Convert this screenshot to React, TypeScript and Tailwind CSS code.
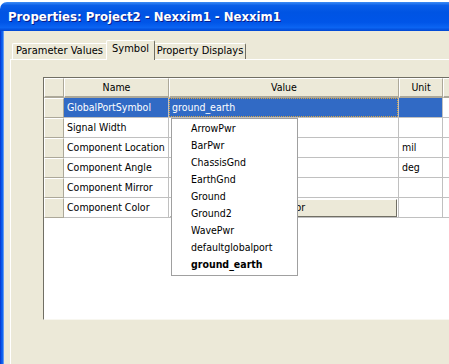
import React from "react";

const rows = [
  { name: "GlobalPortSymbol", value: "ground_earth", unit: "", selected: true },
  { name: "Signal Width", value: "", unit: "" },
  { name: "Component Location", value: "", unit: "mil" },
  { name: "Component Angle", value: "", unit: "deg" },
  { name: "Component Mirror", value: "", unit: "" },
  { name: "Component Color", value: "", unit: "", button: "Set Color" },
];

const symbols = [
  "ArrowPwr",
  "BarPwr",
  "ChassisGnd",
  "EarthGnd",
  "Ground",
  "Ground2",
  "WavePwr",
  "defaultglobalport",
];

const HeaderCell = ({ w, children }: { w: string; children?: React.ReactNode }) => (
  <div
    className={`${w} h-[20px] shrink-0 flex items-center justify-center bg-[#ece9d8] border-t border-l border-white border-r border-r-[#aca899] border-b-2 border-b-[#aca899]`}
  >
    {children}
  </div>
);

const App = () => {
  return (
    <div className="relative w-[449px] h-[364px] overflow-hidden bg-white text-[10.5px] text-black [font-family:'DejaVu_Sans_Condensed','Liberation_Sans',sans-serif]">
      <div className="h-[2px] bg-white" />
      <div className="h-[29px] rounded-tl-[7px] pl-[8px] flex items-center bg-[linear-gradient(to_bottom,#3d8cf5_0%,#0a5ee8_12%,#0054e3_35%,#0055e8_70%,#0b64f2_88%,#0046d2_100%)] text-white font-bold text-[13px] [text-shadow:1px_1px_#0a1d8c]">
        Properties: Project2 - Nexxim1 - Nexxim1
      </div>
      <div className="flex h-[333px]">
        <div className="w-[4px] shrink-0 bg-[linear-gradient(to_right,#0a2fc8,#0656ea,#1668ef,#8fb6f5)]" />
        <div className="flex-1 flex flex-col bg-[#ece9d8] pt-[9px] pl-[6px]">
          <div className="flex items-end h-[19px] pl-[2px] relative z-10 text-[11px]">
            <div className="w-[94px] h-[16px] flex items-center justify-center border-t border-l border-white rounded-tl-[2px]">
              Parameter Values
            </div>
            <div className="w-[49px] h-[20px] -mb-[1px] pb-[3px] flex items-center justify-center bg-[#ece9d8] border-t border-l border-white border-r border-r-[#716f64] rounded-t-[2px]">
              Symbol
            </div>
            <div className="w-[91px] h-[16px] flex items-center justify-center border-t border-white border-r border-r-[#716f64] rounded-tr-[2px]">
              Property Displays
            </div>
          </div>
          <div className="flex-1 border-l border-t border-white pl-[32px] pt-[17px]">
            <div className="h-[243px] w-[460px] bg-white border-l border-t border-[#716f64] border-b border-b-[#f8f7f0]">
              <div className="flex">
                <HeaderCell w="w-[20px]" />
                <HeaderCell w="w-[105px]">Name</HeaderCell>
                <HeaderCell w="w-[230px]">Value</HeaderCell>
                <HeaderCell w="w-[44px]">Unit</HeaderCell>
                <HeaderCell w="w-[60px]" />
              </div>
              {rows.map((r) => (
                <div key={r.name} className="flex h-[20px]">
                  <div className="w-[20px] shrink-0 bg-[#ece9d8] border-t border-l border-white border-r border-b border-r-[#aca899] border-b-[#aca899]" />
                  <div
                    className={`w-[105px] shrink-0 flex items-center pl-[3px] border-r border-b border-[#c0c0c0] whitespace-nowrap overflow-hidden ${
                      r.selected ? "bg-[#316ac5] text-white" : ""
                    }`}
                  >
                    {r.name}
                  </div>
                  <div
                    className={`w-[230px] shrink-0 flex items-center border-r border-b border-[#c0c0c0] ${
                      r.selected ? "bg-[#316ac5] text-white" : ""
                    }`}
                  >
                    {r.selected && (
                      <div className="w-full h-full flex items-center pl-[2px] border border-dotted border-[#d9a441]">
                        {r.value}
                      </div>
                    )}
                    {r.button && (
                      <div className="w-full h-[18px] ml-[1px] mr-[1px] flex items-center justify-center bg-[#ece9d8] border-t border-l border-white border-r border-b border-r-[#716f64] border-b-[#716f64]">
                        {r.button}
                      </div>
                    )}
                  </div>
                  <div
                    className={`w-[44px] shrink-0 flex items-center pl-[3px] border-r border-b border-[#c0c0c0] ${
                      r.selected ? "bg-[#316ac5]" : ""
                    }`}
                  >
                    {r.unit}
                  </div>
                  <div className="w-[60px] shrink-0 border-b border-[#c0c0c0]" />
                </div>
              ))}
            </div>
          </div>
        </div>
      </div>
      <div className="absolute left-[171px] top-[118px] w-[127px] h-[158px] bg-white border border-[#a0a0a0] pt-[1px]">
        {symbols.map((s) => (
          <div key={s} className="h-[17px] leading-[17px] pl-[19px]">
            {s}
          </div>
        ))}
        <div className="h-[17px] leading-[17px] pl-[19px] font-bold">ground_earth</div>
      </div>
    </div>
  );
};

export default App;
